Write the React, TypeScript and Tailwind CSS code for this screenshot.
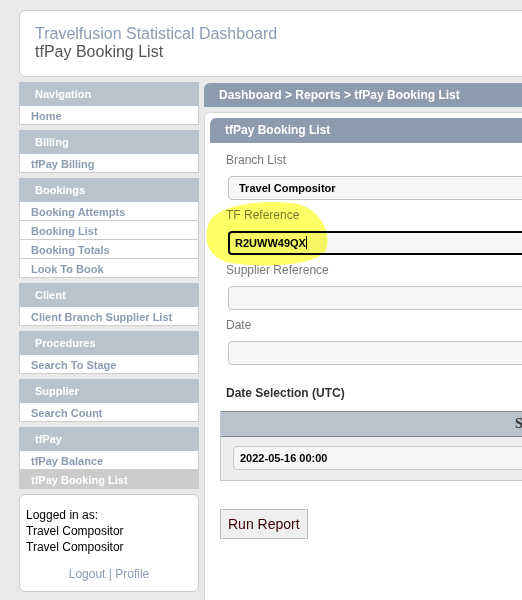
import React from 'react';

const font = { fontFamily: '"Liberation Sans", Arial, sans-serif' };

type Section = { title: string; items: string[]; active?: string };

const sections: Section[] = [
  { title: 'Navigation', items: ['Home'] },
  { title: 'Billing', items: ['tfPay Billing'] },
  { title: 'Bookings', items: ['Booking Attempts', 'Booking List', 'Booking Totals', 'Look To Book'] },
  { title: 'Client', items: ['Client Branch Supplier List'] },
  { title: 'Procedures', items: ['Search To Stage'] },
  { title: 'Supplier', items: ['Search Count'] },
  { title: 'tfPay', items: ['tfPay Balance', 'tfPay Booking List'], active: 'tfPay Booking List' },
];

const SideSection: React.FC<{ s: Section }> = ({ s }) => (
  <div className="mb-[5px]">
    <div className="h-[24px] bg-[#b9c3cd] pl-[16px] text-[11px] font-bold leading-[24px] text-white">{s.title}</div>
    {s.items.map(item => (
      <div
        key={item}
        className={
          item === s.active
            ? 'h-[19px] bg-[#cccccc] pl-[12px] text-[11px] font-bold leading-[20px] text-white'
            : 'h-[19px] border-x border-b border-[#cccccc] bg-white pl-[11px] text-[11px] font-bold leading-[20px] text-[#8b9cb4]'
        }
      >
        {item}
      </div>
    ))}
  </div>
);

const Field: React.FC<{ label: string; value?: string; focused?: boolean }> = ({ label, value, focused }) => (
  <div className="mb-[7px]">
    <div className="mb-[8px] pl-[16px] text-[12px] leading-[16px] text-[#777777]">{label}</div>
    <div
      className={
        focused
          ? 'ml-[18px] h-[24px] rounded-[4px] border-2 border-black bg-[#f6f6f6] pl-[5px] text-[11px] font-bold leading-[20px] text-black'
          : 'ml-[18px] h-[24px] rounded-[4px] border border-[#c4c4c4] bg-[#f6f6f6] pl-[10px] text-[11px] font-bold leading-[22px] text-black'
      }
    >
      {value}
      {focused && <span className="inline-block h-[13px] w-px translate-y-[2px] bg-black" />}
    </div>
  </div>
);

export default function App() {
  return (
    <div className="relative h-[600px] w-[522px] overflow-hidden bg-[#e9e9e9]" style={font}>
      <div className="w-[900px] pl-[19px] pt-[10px]">
        <div className="h-[67px] rounded-l-[6px] border border-[#cfcfcf] bg-white pl-[15px] pt-[14px]">
          <div className="text-[16px] leading-[18px] text-[#8b9cb4]">Travelfusion Statistical Dashboard</div>
          <div className="text-[16px] leading-[18px] text-[#555555]">tfPay Booking List</div>
        </div>

        <div className="mt-[5px] flex gap-[5px]">
          <div className="w-[180px] shrink-0">
            {sections.map(s => (
              <SideSection key={s.title} s={s} />
            ))}
            <div className="h-[98px] rounded-[6px] border border-[#cccccc] bg-white px-[6px] pt-[12px] text-[12px] leading-[16px] text-black">
              <div>Logged in as:</div>
              <div>Travel Compositor</div>
              <div>Travel Compositor</div>
              <div className="mt-[11px] text-center text-[#8b9cb4]">Logout | Profile</div>
            </div>
          </div>

          <div className="flex-1">
            <div className="mt-px h-[24px] rounded-tl-[6px] bg-[#8c9cae] pl-[15px] text-[12px] font-bold leading-[24px] text-white">
              Dashboard &gt; Reports &gt; tfPay Booking List
            </div>
            <div className="mt-[5px] h-[520px] rounded-tl-[6px] border border-[#d6d6d6] bg-white pl-[5px] pt-[5px]">
              <div className="h-[25px] rounded-tl-[6px] bg-[#8c9cae] pl-[15px] text-[12px] font-bold leading-[25px] text-white">
                tfPay Booking List
              </div>
              <div className="pr-[20px] pt-[9px]">
                <Field label="Branch List" value="Travel Compositor" />
                <Field label="TF Reference" value="R2UWW49QX" focused />
                <Field label="Supplier Reference" />
                <Field label="Date" />

                <div className="mt-[20px] pl-[16px] text-[12px] font-bold leading-[16px] text-[#333333]">
                  Date Selection (UTC)
                </div>

                <div className="ml-[10px] mt-[10px] border-x border-b border-[#c8c8c8]">
                  <div
                    className="h-[26px] border-y border-[#888888] bg-[#b9c3cd] pl-[294px] text-[14px] font-bold leading-[24px] text-[#333333]"
                    style={{ fontFamily: '"Liberation Serif", "Times New Roman", serif' }}
                  >
                    Start
                  </div>
                  <div className="bg-[#eeeeee] px-[12px] pb-[10px] pt-[9px]">
                    <div className="h-[24px] rounded-[4px] border border-[#c8c8c8] bg-[#f6f6f6] pl-[6px] text-[11px] font-bold leading-[22px] text-black">
                      2022-05-16 00:00
                    </div>
                  </div>
                </div>

                <button className="ml-[10px] mt-[28px] h-[30px] border border-[#bbbbbb] bg-[#efefef] px-[7px] text-[14px] leading-[28px] text-[#3a0000]">
                  Run Report
                </button>
              </div>
            </div>
          </div>
        </div>
      </div>

      <svg className="pointer-events-none absolute left-0 top-0 mix-blend-multiply" width="522" height="600">
        <path
          d="M208 226 C212 206, 258 198, 298 204 C320 210, 332 232, 326 250 C318 266, 262 268, 230 263 C210 259, 203 242, 208 226 Z"
          fill="#ffff66"
        />
      </svg>
    </div>
  );
}
